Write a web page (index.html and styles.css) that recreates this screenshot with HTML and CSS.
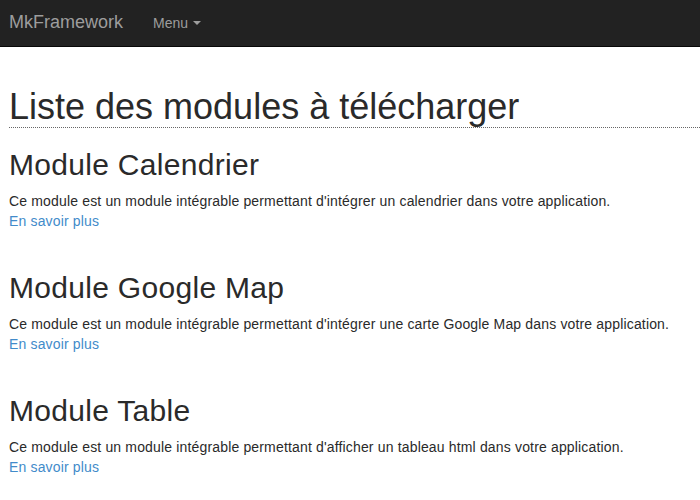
FILE: index.html
```html
<!DOCTYPE html>
<html lang="fr">
<head>
<meta charset="utf-8">
<title>MkFramework</title>
<link rel="stylesheet" href="styles.css">
</head>
<body>
<nav class="navbar">
  <a class="brand" href="#">MkFramework</a>
  <a class="menu" href="#">Menu <span class="caret"></span></a>
</nav>
<main class="content">
  <h1 class="page-title">Liste des modules à télécharger</h1>
  <section class="module">
    <h2>Module Calendrier</h2>
    <p>Ce module est un module intégrable permettant d'intégrer un calendrier dans votre application.<br><a href="#">En savoir plus</a></p>
  </section>
  <section class="module">
    <h2>Module Google Map</h2>
    <p>Ce module est un module intégrable permettant d'intégrer une carte Google Map dans votre application.<br><a href="#">En savoir plus</a></p>
  </section>
  <section class="module">
    <h2>Module Table</h2>
    <p>Ce module est un module intégrable permettant d'afficher un tableau html dans votre application.<br><a href="#">En savoir plus</a></p>
  </section>
</main>
</body>
</html>
```
FILE: styles.css
```css
html, body {
  margin: 0;
  padding: 0;
}
body {
  font-family: "Liberation Sans", Arial, sans-serif;
  font-size: 14px;
  line-height: 20px;
  color: #2a2a2a;
  background: #fff;
}
a {
  color: #428bca;
  text-decoration: none;
}
.navbar {
  display: flex;
  align-items: center;
  height: 46px;
  background: #222;
  border-bottom: 1px solid #080808;
  padding-left: 9px;
}
.brand {
  font-size: 18px;
  line-height: 20px;
  color: #9d9d9d;
  margin-top: -2px;
}
.menu {
  margin-left: 30px;
  font-size: 14px;
  color: #9d9d9d;
  display: flex;
  align-items: center;
  margin-top: -1px;
}
.caret {
  display: inline-block;
  width: 0;
  height: 0;
  margin-left: 5px;
  border-top: 4px solid #9d9d9d;
  border-left: 4px solid transparent;
  border-right: 4px solid transparent;
}
.content {
  padding-left: 9px;
}
.page-title {
  margin: 40px 0 0;
  font-size: 36px;
  font-weight: 500;
  line-height: 1.1;
  border-bottom: 1px dotted #666;
}
.module h2 {
  margin: 20px 0 10px;
  font-size: 30px;
  font-weight: 500;
  line-height: 1.1;
  letter-spacing: 0.3px;
}
.module p {
  margin: 0 0 40px;
  letter-spacing: 0.16px;
}
```
